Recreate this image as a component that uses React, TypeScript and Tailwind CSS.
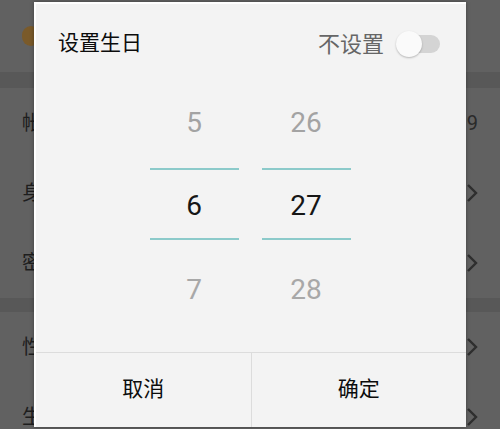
import React from "react";

const font = { fontFamily: '"Roboto", "Noto Sans CJK SC", sans-serif' };

function BackRow({ label, right, h }: { label: string; right?: React.ReactNode; h: string }) {
  return (
    <div className={`flex items-center justify-between px-[22px] ${h}`}>
      <span className="text-[20px] text-[#1e1e1e]">{label}</span>
      <span className="text-[20px] text-[#2a2a2a]">{right}</span>
    </div>
  );
}

function Chevron() {
  return (
    <svg width="12" height="20" viewBox="0 0 12 20" fill="none" stroke="#2e2e2e" strokeWidth="2.4">
      <path d="M2 2l8 8-8 8" />
    </svg>
  );
}

function Column({ prev, cur, next }: { prev: string; cur: string; next: string }) {
  return (
    <div className="flex w-[89px] flex-col">
      <div className="flex h-[84px] items-center justify-center pb-[6px] text-[28px] text-[#a3a3a3]">{prev}</div>
      <div className="h-[2px] bg-[#8ccaca]" />
      <div className="flex h-[68px] items-center justify-center pt-[4px] text-[28px] text-[#161616]">{cur}</div>
      <div className="h-[2px] bg-[#8ccaca]" />
      <div className="flex h-[100px] items-center justify-center text-[28px] text-[#a8a8a8]">{next}</div>
    </div>
  );
}

export default function App() {
  return (
    <div className="relative h-[429px] w-[500px] overflow-hidden bg-[#616161]" style={font}>
      {/* page behind the dimmed layer */}
      <div className="flex flex-col">
        <div className="flex h-[72px] items-center px-[22px]">
          <div className="h-[20px] w-[18px] rounded-full bg-[#7a5a2a]" />
        </div>
        <div className="h-[16px] bg-[#585858]" />
        <BackRow label="帐号" right="9" h="h-[70px]" />
        <BackRow label="身份" right={<Chevron />} h="h-[70px]" />
        <BackRow label="密码" right={<Chevron />} h="h-[70px]" />
        <div className="h-[14px] bg-[#585858]" />
        <BackRow label="性别" right={<Chevron />} h="h-[70px]" />
        <BackRow label="生日" right={<Chevron />} h="h-[70px]" />
      </div>

      {/* dialog */}
      <div className="absolute left-[34px] top-[2px] flex h-[425px] w-[432px] flex-col border-l-2 border-t-2 border-white bg-[#f3f3f3] shadow-[0_0_4px_rgba(0,0,0,0.35)]">
        <div className="flex h-[80px] items-center justify-between pl-[22px] pr-[26px]">
          <span className="text-[21px] text-[#0c0c0c]">设置生日</span>
          <div className="flex items-center gap-[14px]">
            <span className="text-[22px] text-[#666]">不设置</span>
            <div className="relative h-[18px] w-[42px]">
              <div className="absolute right-0 top-0 h-[18px] w-[38px] rounded-full bg-[#d4d4d4]" />
              <div className="absolute -left-[2px] -top-[4px] h-[26px] w-[26px] rounded-full bg-[#fafafa] shadow-[0_1px_2px_rgba(0,0,0,0.25)]" />
            </div>
          </div>
        </div>

        <div className="flex justify-center gap-[23px] pr-[2px]">
          <Column prev="5" cur="6" next="7" />
          <Column prev="26" cur="27" next="28" />
        </div>

        <div className="mt-auto flex h-[75px] border-t border-[#dcdcdc]">
          <div className="flex flex-1 items-center justify-center border-r border-[#dcdcdc] text-[21px] text-[#0c0c0c]">取消</div>
          <div className="flex flex-1 items-center justify-center text-[21px] text-[#0c0c0c]">确定</div>
        </div>
      </div>
    </div>
  );
}
